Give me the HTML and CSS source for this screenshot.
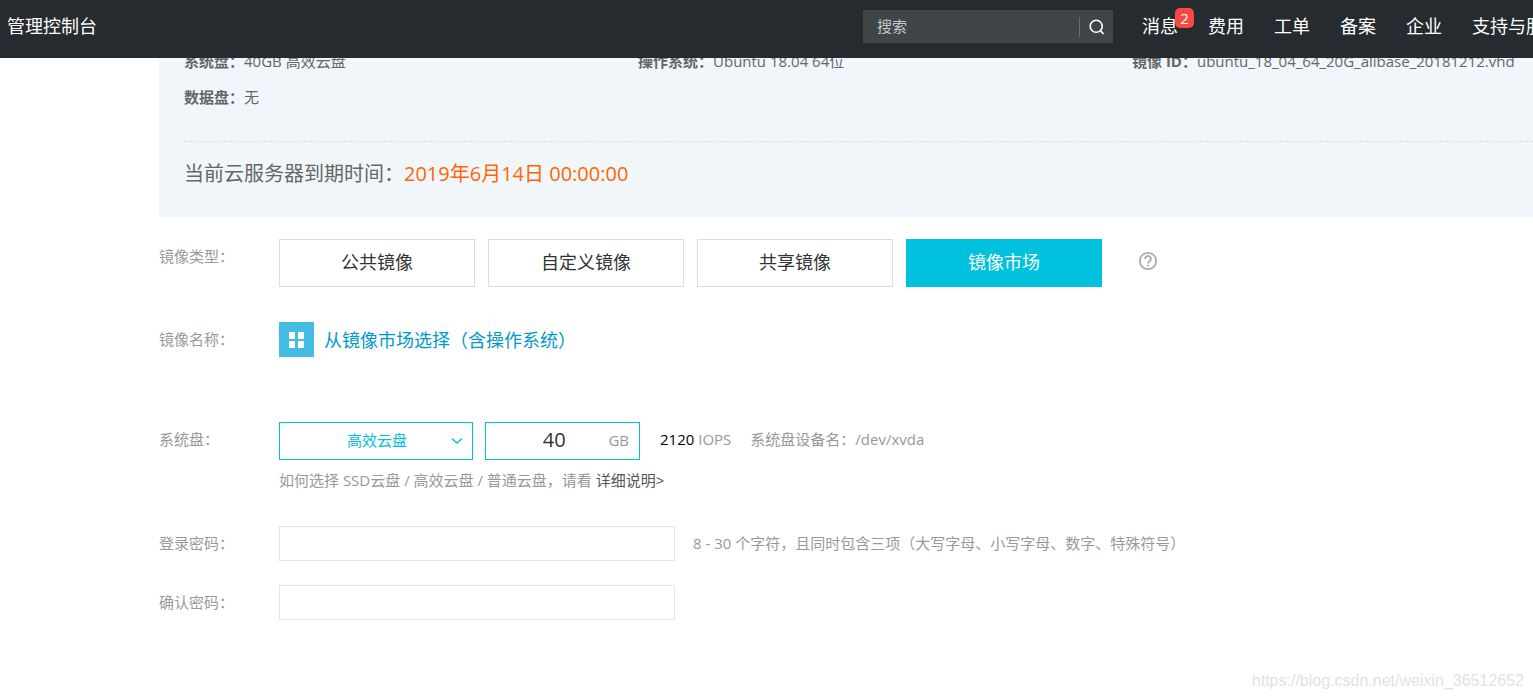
FILE: index.html
```html
<!DOCTYPE html>
<html lang="zh-CN">
<head>
<meta charset="utf-8">
<title>管理控制台</title>
<link rel="stylesheet" href="styles.css">
</head>
<body>
<header class="topbar">
  <a class="brand" href="#">管理控制台</a>
  <form class="search" role="search">
    <input class="search-input" type="search" placeholder="搜索" aria-label="搜索">
    <button class="search-button" type="button" aria-label="搜索">
      <svg width="18" height="18" viewBox="0 0 18 18" fill="none" stroke="currentColor" stroke-width="1.6"><circle cx="8.2" cy="8.2" r="6"/><path d="M12.4 12.6l3.2 3.4"/></svg>
    </button>
  </form>
  <nav class="nav">
    <a class="nav-link" href="#">消息<span class="badge">2</span></a>
    <a class="nav-link" href="#">费用</a>
    <a class="nav-link" href="#">工单</a>
    <a class="nav-link" href="#">备案</a>
    <a class="nav-link" href="#">企业</a>
    <a class="nav-link" href="#">支持与服务</a>
  </nav>
</header>
<main class="content">
  <section class="summary">
    <div class="specs">
      <div><b>系统盘：</b>40GB 高效云盘</div>
      <div><b>操作系统：</b>Ubuntu 18.04 64位</div>
      <div><b>镜像 ID：</b>ubuntu_18_04_64_20G_alibase_20181212.vhd</div>
      <div><b>数据盘：</b>无</div>
    </div>
    <p class="expiry">当前云服务器到期时间：<span class="expiry-date">2019年6月14日 00:00:00</span></p>
  </section>
  <form class="form">
    <div class="row row-type">
      <span class="label" id="type-label">镜像类型：</span>
      <div class="field types" role="group" aria-labelledby="type-label">
        <button class="type" type="button">公共镜像</button>
        <button class="type" type="button">自定义镜像</button>
        <button class="type" type="button">共享镜像</button>
        <button class="type type-active" type="button" aria-pressed="true">镜像市场</button>
        <button class="help" type="button" aria-label="帮助">
          <svg width="20" height="20" viewBox="0 0 20 20" fill="none" stroke="currentColor" stroke-width="1.8"><circle cx="10" cy="10" r="8.2"/><path d="M7.1 8.1a2.9 2.9 0 1 1 4.6 2.1c-1 .7-1.7 1.2-1.7 2.4"/><path d="M10 13.8v1.8"/></svg>
        </button>
      </div>
    </div>
    <div class="row row-name">
      <span class="label">镜像名称：</span>
      <a class="field market" href="#">
        <svg width="35" height="35" viewBox="0 0 35 35"><path fill="#43bde3" d="M0 0h35v35H0z"/><path fill="#fff" d="M10 10h6v7h-6zM19 10h6v7h-6zM10 19h6v7h-6zM19 19h6v7h-6z"/></svg>
        从镜像市场选择（含操作系统）
      </a>
    </div>
    <div class="row row-disk">
      <label class="label" for="disk">系统盘：</label>
      <div class="field disk">
        <div class="select-box">
          <select class="select" id="disk"><option>高效云盘</option><option>SSD云盘</option><option>普通云盘</option></select>
          <svg class="chevron" width="12" height="8" viewBox="0 0 12 8" fill="none" stroke="currentColor" stroke-width="1.5"><path d="M1 1.5l5 4.5 5-4.5"/></svg>
        </div>
        <label class="size"><input class="size-input" type="text" value="40" aria-label="系统盘容量"><span class="unit">GB</span></label>
        <span class="note iops"><span class="strong">2120</span> IOPS</span>
        <span class="note">系统盘设备名：/dev/xvda</span>
      </div>
    </div>
    <p class="tip">如何选择 SSD云盘 / 高效云盘 / 普通云盘，请看 <a class="tip-link" href="#">详细说明&gt;</a></p>
    <div class="row row-password">
      <label class="label" for="password">登录密码：</label>
      <div class="field">
        <input class="password" id="password" type="password">
        <span class="hint">8 - 30 个字符，且同时包含三项（大写字母、小写字母、数字、特殊符号）</span>
      </div>
    </div>
    <div class="row row-password">
      <label class="label" for="confirm">确认密码：</label>
      <div class="field"><input class="password" id="confirm" type="password"></div>
    </div>
  </form>
</main>
<footer class="watermark">https://blog.csdn.net/weixin_36512652</footer>
</body>
</html>
```
FILE: styles.css
```css
* { box-sizing: border-box; }

body {
  margin: 0;
  background: #fff;
  color: #999;
  font: 15px/24px "Open Sans", "Noto Sans CJK SC", sans-serif;
  overflow-x: hidden;
}

a { color: inherit; text-decoration: none; }
button, input, select { font: inherit; border-radius: 0; }
svg { display: block; flex: none; }

.topbar {
  display: flex;
  align-items: flex-start;
  height: 58px;
  background: #262b2f;
  color: #fff;
  font-size: 18px;
  line-height: 32px;
  overflow: hidden;
}
.brand { flex: 1; padding: 10px 0 0 7px; }
.search {
  display: flex;
  align-items: center;
  width: 250px;
  height: 33px;
  margin-top: 10px;
  background: #404548;
}
.search-input {
  flex: 1;
  min-width: 0;
  padding: 0 14px 2px;
  border: 0;
  background: none;
  color: #fff;
  font-size: 15px;
  outline: 0;
}
.search-input::placeholder { color: #c4c6c8; }
.search-button {
  width: 34px;
  height: 20px;
  padding: 0 0 0 8px;
  border: 0;
  border-left: 1px solid #6a6e71;
  background: none;
  color: #fff;
}
.nav {
  flex: none;
  display: flex;
  gap: 30px;
  width: 420px;
  padding: 10px 0 0 29px;
  white-space: nowrap;
}
.nav-link { position: relative; flex: none; }
.badge {
  position: absolute;
  top: -2px;
  right: -16px;
  width: 19px;
  height: 20px;
  border-radius: 5px;
  background: #f94743;
  font-size: 15px;
  line-height: 20px;
  text-align: center;
}

.content { padding-left: 159px; overflow: hidden; }
.summary {
  margin-top: -15px;
  padding: 0 0 23px 25px;
  background: #f0f6f9;
  color: #666;
}
.specs {
  display: grid;
  grid-template-columns: 454fr 494fr 401fr;
  padding-bottom: 26px;
  border-bottom: 1px dashed #d9dfe2;
  line-height: 36px;
  white-space: nowrap;
}
.specs > div { min-width: 0; }
.expiry { margin: 0; padding-top: 12px; font-size: 20px; line-height: 40px; }
.expiry-date { color: #f60; }

.form { padding-top: 22px; }
.row { display: flex; align-items: center; }
.label { flex: none; width: 120px; padding-bottom: 2px; }
.field { display: flex; align-items: center; }

.row-type { align-items: flex-start; }
.row-type .label { padding-top: 5px; }
.types { gap: 13px; }
.type {
  width: 196px;
  height: 48px;
  padding: 0 0 2px;
  border: 1px solid #ddd;
  background: #fff;
  color: #333;
  font-size: 18px;
}
.type-active { border-color: #00c1de; background: #00c1de; color: #fff; }
.help { margin-left: 23px; padding: 0 0 4px; border: 0; background: none; color: #aaa; }

.row-name { margin-top: 35px; }
.market { gap: 10px; color: #0099cc; font-size: 18px; }

.row-disk { margin-top: 65px; }
.row-disk .label, .note { padding-bottom: 4px; }
.select-box { position: relative; width: 194px; margin-right: 12px; color: #00c1de; }
.select {
  display: block;
  width: 100%;
  height: 38px;
  padding: 0 0 2px 2px;
  border: 1px solid #00c1de;
  background: #fff;
  color: inherit;
  text-align: center;
  text-align-last: center;
  appearance: none;
}
.chevron { position: absolute; top: 15px; right: 10px; pointer-events: none; }
.size {
  display: flex;
  align-items: center;
  width: 155px;
  height: 38px;
  padding: 0 10px 2px 14px;
  border: 1px solid #00c1de;
}
.size-input {
  flex: 1;
  min-width: 0;
  padding: 0;
  border: 0;
  color: #333;
  font-size: 20px;
  text-align: center;
  outline: 0;
}
.iops { margin: 0 19px 0 20px; }
.strong { color: #000; }

.tip { margin: 8px 0 0 120px; }
.tip-link { color: #555; }

.row-password { margin-top: 24px; }
.tip + .row-password { margin-top: 34px; }
.password {
  width: 396px;
  height: 35px;
  padding: 0 10px;
  border: 1px solid #e5e5e5;
  background: #fff;
}
.hint { margin-left: 18px; padding-bottom: 2px; }

.watermark {
  padding: 49px 9px 0 0;
  color: #e2e2e2;
  font: 16px/24px "Liberation Sans", sans-serif;
  text-align: right;
}
```
